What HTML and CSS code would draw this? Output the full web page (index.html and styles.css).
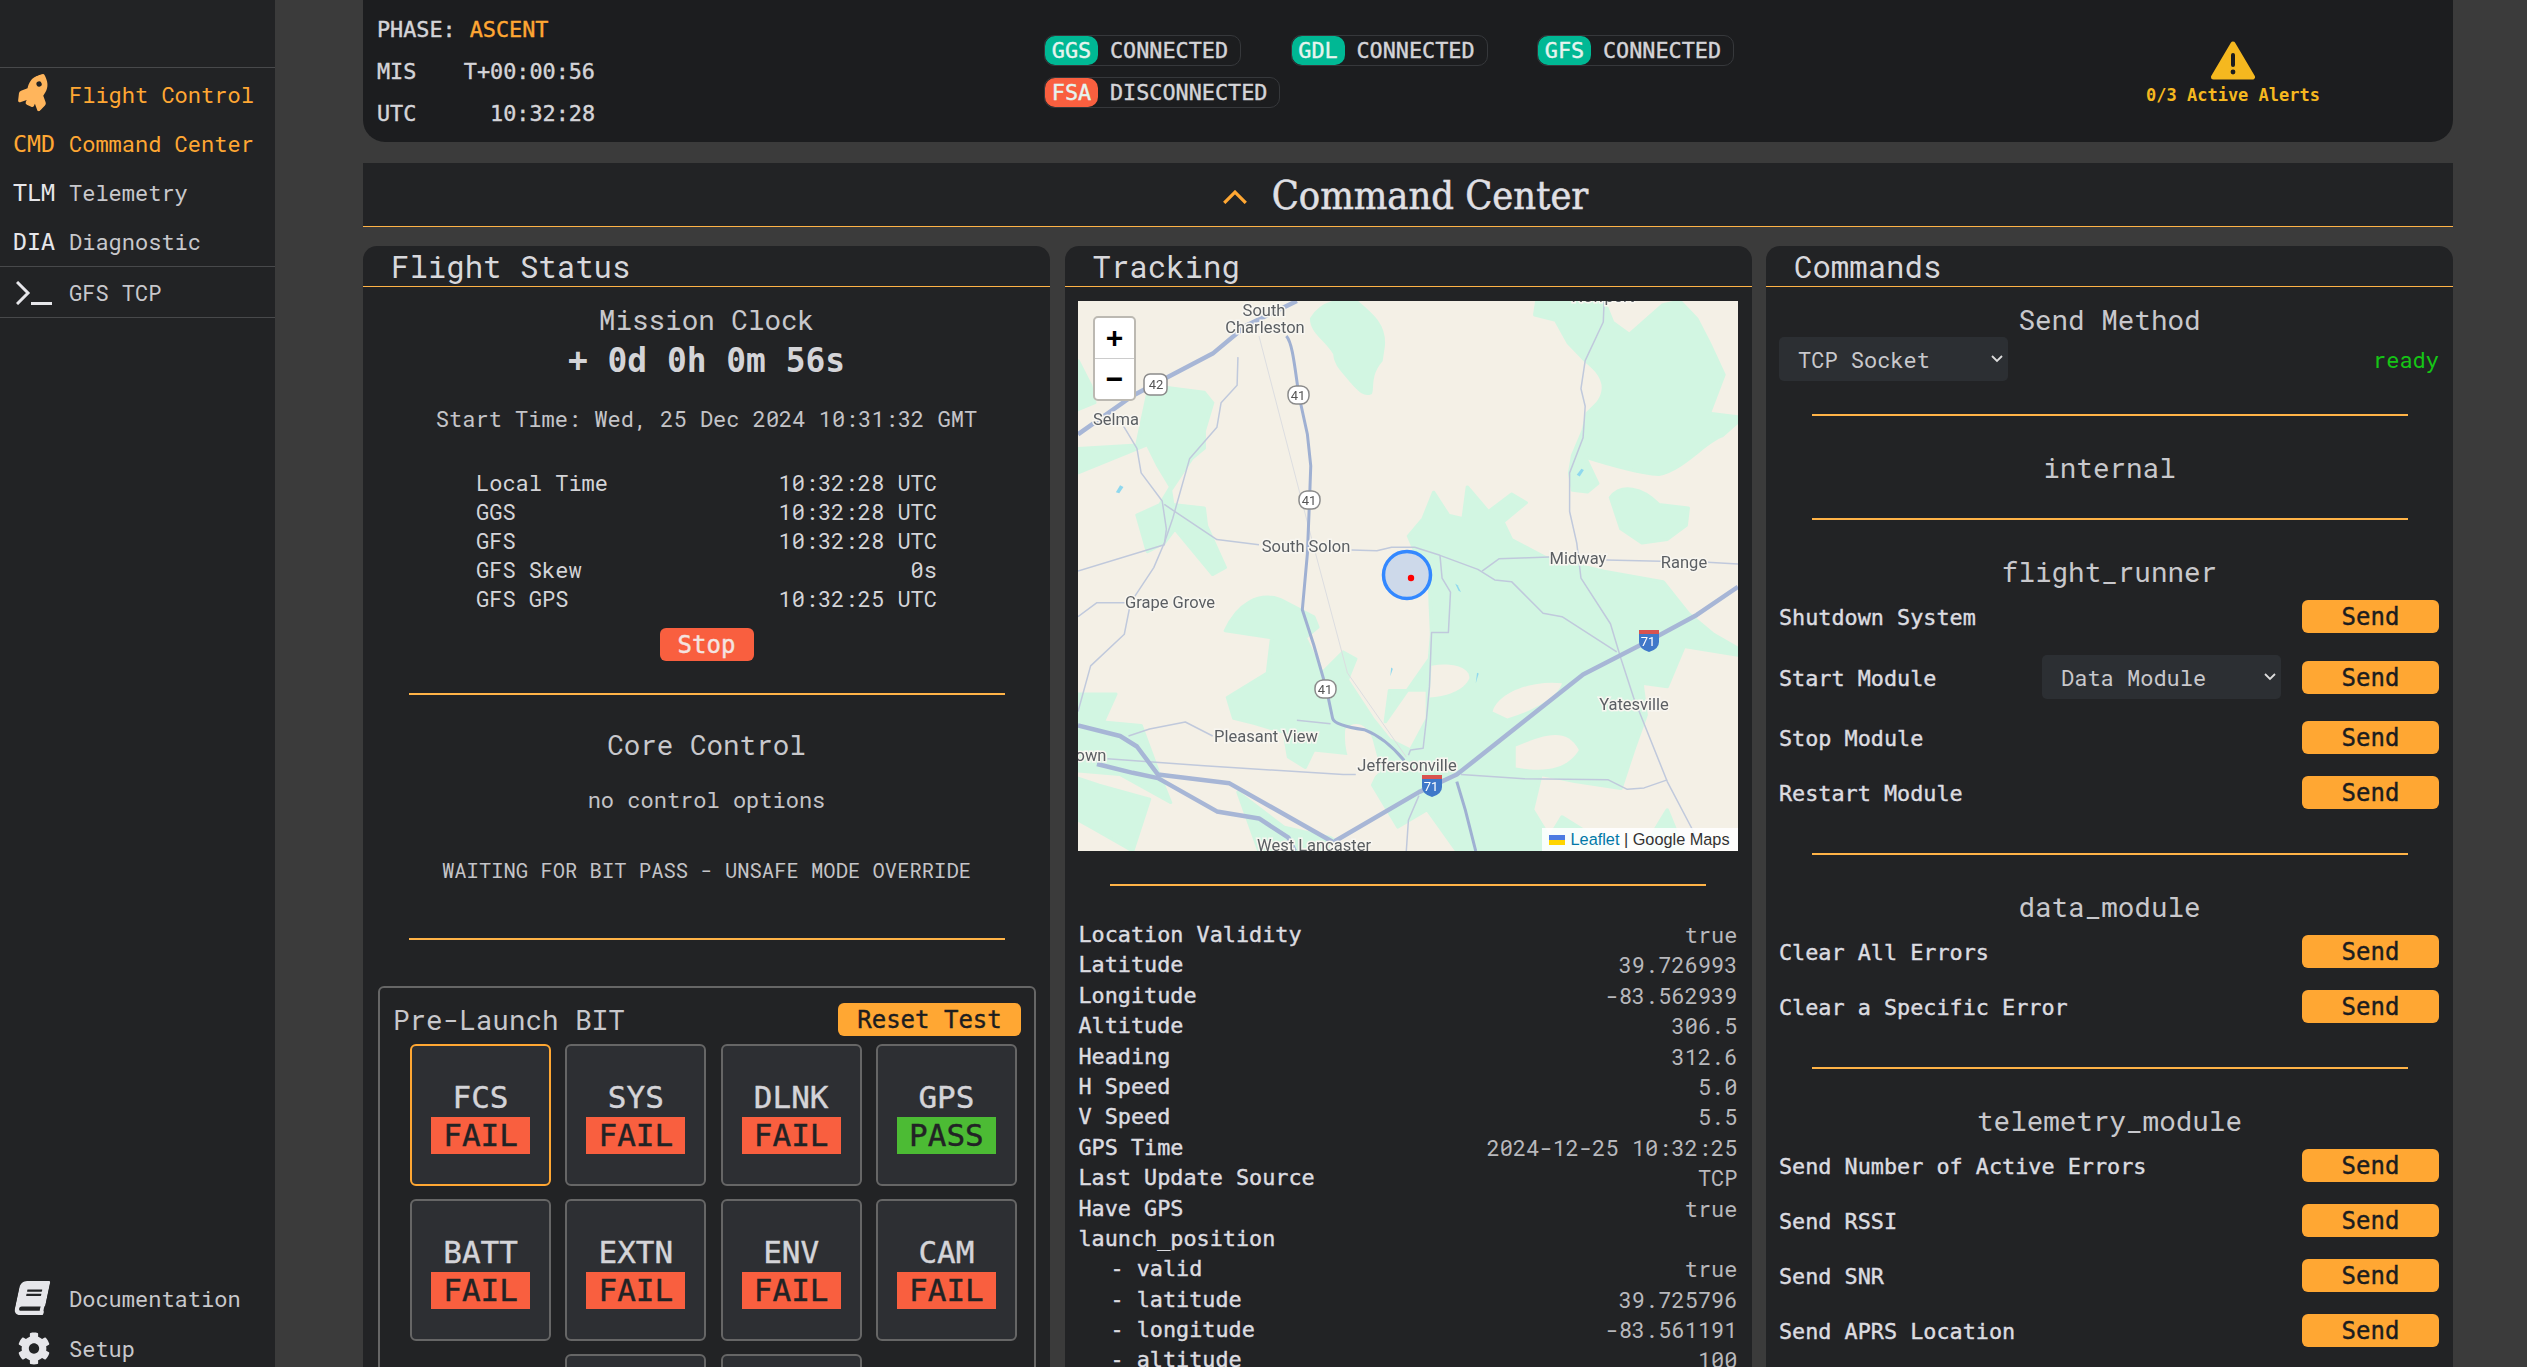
FILE: index.html
```html
<!DOCTYPE html>
<html>
<head>
    <title>Command Center</title>
    <link rel="stylesheet" href="styles.css">
</head>
<body>
    <nav class="sidebar">
        <div class="nav_group">
            <div class="nav_row active">
                <span class="nav_icon">
                    <svg class="rocket" viewBox="0 0 512 512"><path d="M505.05 19.1a15.89 15.89 0 0 0-12.2-12.2C460.65 0 435.46 0 410.36 0c-103.2 0-165.1 55.2-211.29 128H94.87A48 48 0 0 0 52 154.49l-49.42 98.8A24 24 0 0 0 24.07 288h103.77l-22.47 22.47a32 32 0 0 0 0 45.25l50.9 50.91a32 32 0 0 0 45.26 0L224 384.16V488a24 24 0 0 0 34.7 21.49l98.7-49.39a47.91 47.91 0 0 0 26.5-42.9V312.79c72.59-46.3 128-108.4 128-211.09.1-25.2.1-50.4-6.85-82.6zM384 168a40 40 0 1 1 40-40 40 40 0 0 1-40 40z"/></svg>
                </span>
                <span>Flight Control</span>
            </div>
            <div class="nav_row active"><span class="nav_icon nav_tag">CMD</span><span>Command Center</span></div>
            <div class="nav_row"><span class="nav_icon nav_tag">TLM</span><span>Telemetry</span></div>
            <div class="nav_row"><span class="nav_icon nav_tag">DIA</span><span>Diagnostic</span></div>
        </div>
        <div class="nav_group">
            <div class="nav_row">
                <span class="nav_icon">
                    <svg class="terminal" viewBox="0 0 36 24"><path d="M1 1 L12 12 L1 23"/><path d="M15 22.5 H36"/></svg>
                </span>
                <span>GFS TCP</span>
            </div>
        </div>
        <div class="nav_bottom">
            <div class="nav_row">
                <span class="nav_icon">
                    <svg class="book" viewBox="0 0 448 512"><path d="M448 360V24c0-13.3-10.7-24-24-24H96C43 0 0 43 0 96v320c0 53 43 96 96 96h328c13.3 0 24-10.7 24-24v-16c0-7.5-3.5-14.3-8.9-18.7-4.2-15.4-4.2-59.3 0-74.7 5.4-4.3 8.9-11.1 8.9-18.6zM128 134c0-3.3 2.7-6 6-6h212c3.3 0 6 2.7 6 6v20c0 3.3-2.7 6-6 6H134c-3.3 0-6-2.7-6-6v-20zm0 64c0-3.3 2.7-6 6-6h212c3.3 0 6 2.7 6 6v20c0 3.3-2.7 6-6 6H134c-3.3 0-6-2.7-6-6v-20zm253.4 250H96c-17.7 0-32-14.3-32-32 0-17.6 14.4-32 32-32h285.4c-1.9 17.1-1.9 46.9 0 64z"/></svg>
                </span>
                <span>Documentation</span>
            </div>
            <div class="nav_row">
                <span class="nav_icon">
                    <svg class="gear" viewBox="0 0 512 512"><path d="M487.4 315.7l-42.6-24.6c4.3-23.2 4.3-47 0-70.2l42.6-24.6c4.9-2.8 7.1-8.6 5.5-14-11.1-35.6-30-67.8-54.7-94.6-3.8-4.1-10-5.1-14.8-2.3L380.8 110c-17.9-15.4-38.5-27.3-60.8-35.1V25.8c0-5.6-3.9-10.5-9.4-11.7-36.7-8.2-74.3-7.8-109.2 0-5.5 1.2-9.4 6.1-9.4 11.7V75c-22.2 7.9-42.8 19.8-60.8 35.1L88.7 85.5c-4.9-2.8-11-1.9-14.8 2.3-24.7 26.7-43.6 58.9-54.7 94.6-1.7 5.4.6 11.2 5.5 14L67.3 221c-4.3 23.2-4.3 47 0 70.2l-42.6 24.6c-4.9 2.8-7.1 8.6-5.5 14 11.1 35.6 30 67.8 54.7 94.6 3.8 4.1 10 5.1 14.8 2.3l42.6-24.6c17.9 15.4 38.5 27.3 60.8 35.1v49.2c0 5.6 3.9 10.5 9.4 11.7 36.7 8.2 74.3 7.8 109.2 0 5.5-1.2 9.4-6.1 9.4-11.7v-49.2c22.2-7.9 42.8-19.8 60.8-35.1l42.6 24.6c4.9 2.8 11 1.9 14.8-2.3 24.7-26.7 43.6-58.9 54.7-94.6 1.5-5.5-.7-11.3-5.6-14.1zM256 336c-44.1 0-80-35.9-80-80s35.9-80 80-80 80 35.9 80 80-35.9 80-80 80z"/></svg>
                </span>
                <span>Setup</span>
            </div>
        </div>
    </nav>

    <main class="content">
        <header class="status_bar">
            <div class="status_times">
                <div class="phase_row">PHASE:<span class="phase_value">ASCENT</span></div>
                <div class="time_row"><span>MIS</span><span>T+00:00:56</span></div>
                <div class="time_row"><span>UTC</span><span>10:32:28</span></div>
            </div>
            <div class="status_links">
                <div class="link_badge"><span class="link_tag ok">GGS</span><span>CONNECTED</span></div>
                <div class="link_badge"><span class="link_tag ok">GDL</span><span>CONNECTED</span></div>
                <div class="link_badge"><span class="link_tag ok">GFS</span><span>CONNECTED</span></div>
                <div class="link_badge"><span class="link_tag bad">FSA</span><span>DISCONNECTED</span></div>
            </div>
            <div class="status_alerts">
                <svg class="warn_icon" viewBox="0 0 44 39">
                    <path class="warn_shape" d="M22 3 L41.5 36 H2.5 Z"/>
                    <rect class="warn_mark" x="20" y="12" width="4" height="14" rx="2"/>
                    <circle class="warn_mark" cx="22" cy="31" r="2.4"/>
                </svg>
                <div class="warn_text">0/3 Active Alerts</div>
            </div>
        </header>

        <div class="section_header">
            <svg class="chevron" viewBox="0 0 24 13"><path d="M2 12 L12 2 L22 12"/></svg>
            <h1>Command Center</h1>
        </div>

        <div class="panels">
            <section class="panel">
                <h2 class="panel_title">Flight Status</h2>
                <h3 class="sub_title first_title">Mission Clock</h3>
                <div class="big_clock">+ 0d 0h 0m 56s</div>
                <div class="start_time">Start Time: Wed, 25 Dec 2024 10:31:32 GMT</div>
                <table class="clock_table">
                    <tr><td>Local Time</td><td>10:32:28 UTC</td></tr>
                    <tr><td>GGS</td><td>10:32:28 UTC</td></tr>
                    <tr><td>GFS</td><td>10:32:28 UTC</td></tr>
                    <tr><td>GFS Skew</td><td>0s</td></tr>
                    <tr><td>GFS GPS</td><td>10:32:25 UTC</td></tr>
                </table>
                <div class="stop_wrap"><button class="btn btn_stop">Stop</button></div>
                <hr class="divider divider_stop">
                <h3 class="sub_title core_title">Core Control</h3>
                <div class="no_options">no control options</div>
                <div class="waiting">WAITING FOR BIT PASS - UNSAFE MODE OVERRIDE</div>
                <hr class="divider divider_bit">
                <div class="bit_box">
                    <div class="bit_header">
                        <span class="bit_title">Pre-Launch BIT</span>
                        <button class="btn btn_reset">Reset Test</button>
                    </div>
                    <div class="bit_grid">
                        <div class="bit_cell selected"><span>FCS</span><span class="bit_state fail">FAIL</span></div>
                        <div class="bit_cell"><span>SYS</span><span class="bit_state fail">FAIL</span></div>
                        <div class="bit_cell"><span>DLNK</span><span class="bit_state fail">FAIL</span></div>
                        <div class="bit_cell"><span>GPS</span><span class="bit_state pass">PASS</span></div>
                        <div class="bit_cell"><span>BATT</span><span class="bit_state fail">FAIL</span></div>
                        <div class="bit_cell"><span>EXTN</span><span class="bit_state fail">FAIL</span></div>
                        <div class="bit_cell"><span>ENV</span><span class="bit_state fail">FAIL</span></div>
                        <div class="bit_cell"><span>CAM</span><span class="bit_state fail">FAIL</span></div>
                        <div class="bit_cell"></div>
                        <div class="bit_cell"></div>
                    </div>
                </div>
            </section>

            <section class="panel">
                <h2 class="panel_title">Tracking</h2>
                <div class="map">
                    <svg class="map_svg" viewBox="0 0 660 550">
                        <!-- traced at 1568 square, hence the scale -->
                        <g transform="scale(0.4209 0.3508)">
                            <g class="land">
                                <path d="M555 50 C570 20 590 5 620 0 L660 0 C700 40 730 70 725 130 L720 170 C690 210 700 250 695 262 C680 270 670 255 650 230 C630 200 610 180 610 150 C590 110 555 90 555 50 Z"/>
                                <path d="M1090 0 L1085 40 L1135 55 L1165 120 L1205 170 C1250 210 1260 250 1235 290 L1210 320 L1200 370 L1175 440 L1168 490 L1175 540 L1210 545 L1235 520 L1205 445 C1270 470 1330 490 1380 495 C1440 480 1490 400 1530 385 L1568 345 L1568 330 L1500 320 L1535 210 L1500 120 L1470 50 L1430 0 L1390 10 L1310 95 L1270 60 L1250 0 Z"/>
                                <path d="M1265 560 C1290 520 1340 530 1380 580 L1450 590 L1445 640 L1400 680 L1340 690 L1290 650 Z"/>
                                <path d="M170 240 L300 260 L320 290 L300 370 L300 420 L270 450 L220 540 L225 580 L300 590 L305 640 L350 760 L320 780 L230 650 L205 690 L165 715 L140 610 L195 580 L220 530 L190 470 L165 410 L0 490 L0 420 L140 410 Z"/>
                                <path d="M0 170 L30 240 L40 290 L0 310 Z"/>
                                <path d="M785 670 L820 620 L845 545 L880 610 L915 620 L925 530 L975 600 L1030 550 L1065 575 L1010 630 L1030 680 L1110 730 L1250 770 L1390 800 L1450 890 L1510 950 L1568 990 L1568 1010 L1440 985 L1400 1100 L1340 1090 L1350 1180 L1320 1280 L1290 1390 L1180 1370 L1100 1350 L1080 1450 L1140 1568 L900 1568 L830 1450 L760 1500 L700 1380 L720 1330 L640 1290 L560 1280 L540 1330 L500 1300 L490 1230 L420 1205 L370 1190 L355 1130 L450 1060 L460 960 L350 940 C380 860 430 830 480 850 L560 900 L570 930 L540 960 L580 1060 L630 1000 L660 1020 L640 1080 L700 1190 L740 1250 L790 1280 L830 1190 L830 1110 L740 1110 L730 1200 L835 1020 L840 950 L835 810 Z"/>
                                <path d="M0 1120 L90 1120 L60 1200 L150 1210 L190 1340 L220 1430 L100 1350 L0 1340 Z"/>
                                <path d="M0 1360 L50 1380 L170 1420 L130 1568 L30 1500 L0 1480 Z"/>
                                <path d="M380 1400 L490 1500 L600 1530 L650 1568 L430 1568 Z"/>
                                <path d="M1150 1470 L1230 1530 L1280 1568 L1100 1568 Z"/>
                                <path d="M1400 1450 L1440 1568 L1340 1568 Z"/>
                            </g>
                            <g class="clearing">
                                <path d="M840 1040 C880 1030 930 1040 930 1075 C920 1110 870 1130 835 1130 Z"/>
                                <path d="M985 1170 C1000 1110 1090 1080 1150 1090 C1140 1130 1080 1170 1020 1190 Z"/>
                                <path d="M1040 1270 C1100 1240 1160 1210 1190 1280 C1170 1320 1130 1350 1040 1330 Z"/>
                                <path d="M635 1220 C660 1190 690 1210 700 1250 L720 1340 L680 1380 C650 1340 630 1290 635 1220 Z"/>
                            </g>
                            <g class="water">
                                <path d="M90 545 L100 525 L108 530 L98 548 Z"/>
                                <path d="M1185 495 L1196 478 L1202 482 L1192 500 Z"/>
                                <path d="M896 805 L902 810 L910 830 L904 825 Z"/>
                                <path d="M744 1045 L748 1048 L742 1070 Z"/>
                                <path d="M948 1060 L952 1062 L945 1090 Z"/>
                            </g>
                            <g class="road_faint">
                                <path d="M430 100 L560 700 L640 1060 L780 1300"/>
                            </g>
                            <g class="road_thin">
                                <path d="M1250 0 L1248 60 L1205 170 L1195 250 L1205 300 L1200 390 L1168 490 L1168 600 L1185 690 L1195 790 L1265 920 L1290 1020 L1320 1130 L1400 1370 L1470 1530"/>
                                <path d="M205 580 L330 680 L430 695"/>
                                <path d="M650 710 L710 712 L745 702 L800 702 L860 725 L950 765 L990 795 L1030 800 L1105 890 L1150 900 L1280 1000"/>
                                <path d="M960 770 L1000 735 L1120 730"/>
                                <path d="M1255 738 L1385 742"/>
                                <path d="M1495 745 L1568 750"/>
                                <path d="M860 725 L865 790 L885 830 L880 945 L840 945 L835 1100 L828 1190 L820 1275 L790 1280 L785 1295"/>
                                <path d="M0 770 L205 695 L210 650 L200 570 L150 490 L140 420 L100 340"/>
                                <path d="M380 160 L378 240 L340 290 L330 360 L265 450 L225 620 L205 690 L180 760 L125 860 L110 950 L30 1040 L0 1170"/>
                                <path d="M0 900 L45 860 L115 860"/>
                                <path d="M70 1305 L300 1325 L630 1350 L660 1350"/>
                                <path d="M910 1350 L1060 1362 L1260 1365 L1305 1392 L1345 1388 L1400 1365"/>
                                <path d="M120 1240 L170 1220 L255 1200 L320 1240"/>
                                <path d="M520 1195 L600 1205"/>
                                <path d="M810 1410 L785 1480 L780 1568"/>
                            </g>
                            <g class="road_mid">
                                <path d="M495 100 C510 120 515 190 525 270 L545 380 L553 470 L550 570 L545 720 L533 880 L560 980 L590 1105 L605 1190 Q610 1210 680 1222 Q730 1245 775 1310"/>
                                <path d="M900 1370 L920 1450 L945 1568"/>
                            </g>
                            <g class="road_main">
                                <path d="M0 380 L130 270 L200 225 L320 150 L400 70 L520 0"/>
                                <path d="M0 1210 L100 1240 L140 1270 L190 1350 L360 1375 L610 1545"/>
                                <path d="M45 1320 L130 1345 L190 1360 L330 1455 L430 1475 L500 1530 L515 1568"/>
                                <path d="M610 1540 L810 1400 L900 1350 L1200 1065 L1370 960 L1470 895 L1568 815"/>
                            </g>
                        </g>

                        <g class="map_label">
                            <text x="186" y="15">South</text>
                            <text x="187" y="32">Charleston</text>
                            <text x="38" y="124">Selma</text>
                            <text x="228" y="251">South Solon</text>
                            <text x="500" y="263">Midway</text>
                            <text x="606" y="267">Range</text>
                            <text x="92" y="307">Grape Grove</text>
                            <text x="556" y="409">Yatesville</text>
                            <text x="188" y="441">Pleasant View</text>
                            <text x="329" y="470">Jeffersonville</text>
                            <text x="13" y="460">own</text>
                            <text x="236" y="550">West Lancaster</text>
                            <text x="525" y="1">Newport</text>
                        </g>

                        <g class="shield_state">
                            <rect x="66" y="73" width="23" height="21" rx="6"/><text x="78" y="88">42</text>
                            <rect x="210" y="85" width="21" height="18" rx="8"/><text x="220" y="99">41</text>
                            <rect x="221" y="190" width="21" height="18" rx="8"/><text x="231" y="204">41</text>
                            <rect x="237" y="379" width="21" height="18" rx="8"/><text x="247" y="393">41</text>
                        </g>
                        <g class="shield_inter">
                            <path class="shield_top" d="M561 329 H581 V335 H561 Z"/>
                            <path class="shield_body" d="M561 333 H581 V341 Q581 348 571 351 Q561 348 561 341 Z"/>
                            <text x="570" y="345">71</text>
                            <path class="shield_top" d="M344 474 H364 V480 H344 Z"/>
                            <path class="shield_body" d="M344 478 H364 V486 Q364 493 354 496 Q344 493 344 486 Z"/>
                            <text x="353" y="490">71</text>
                        </g>

                        <circle class="range_ring" cx="329" cy="274" r="23.5"/>
                        <circle class="range_dot" cx="333" cy="277" r="3.2"/>
                    </svg>
                    <div class="map_zoom">
                        <span class="zoom_btn">+</span>
                        <span class="zoom_btn">&minus;</span>
                    </div>
                    <div class="map_credit">
                        <svg class="credit_flag" viewBox="0 0 16 10"><rect width="16" height="5" fill="#4c7be1"/><rect y="5" width="16" height="5" fill="#ffd500"/></svg>
                        <span class="credit_link">Leaflet</span> | Google Maps
                    </div>
                </div>
                <hr class="divider">
                <div class="track_list">
                    <div class="track_row"><span class="track_key">Location Validity</span><span>true</span></div>
                    <div class="track_row"><span class="track_key">Latitude</span><span>39.726993</span></div>
                    <div class="track_row"><span class="track_key">Longitude</span><span>-83.562939</span></div>
                    <div class="track_row"><span class="track_key">Altitude</span><span>306.5</span></div>
                    <div class="track_row"><span class="track_key">Heading</span><span>312.6</span></div>
                    <div class="track_row"><span class="track_key">H Speed</span><span>5.0</span></div>
                    <div class="track_row"><span class="track_key">V Speed</span><span>5.5</span></div>
                    <div class="track_row"><span class="track_key">GPS Time</span><span>2024-12-25 10:32:25</span></div>
                    <div class="track_row"><span class="track_key">Last Update Source</span><span>TCP</span></div>
                    <div class="track_row"><span class="track_key">Have GPS</span><span>true</span></div>
                    <div class="track_row"><span class="track_key">launch_position</span></div>
                    <div class="track_row nested"><span class="track_key">- valid</span><span>true</span></div>
                    <div class="track_row nested"><span class="track_key">- latitude</span><span>39.725796</span></div>
                    <div class="track_row nested"><span class="track_key">- longitude</span><span>-83.561191</span></div>
                    <div class="track_row nested"><span class="track_key">- altitude</span><span>100</span></div>
                </div>
            </section>

            <section class="panel">
                <h2 class="panel_title">Commands</h2>
                <h3 class="sub_title first_title">Send Method</h3>
                <div class="method_row">
                    <select class="dropdown method_select"><option>TCP Socket</option></select>
                    <span class="ready">ready</span>
                </div>
                <hr class="divider">
                <h3 class="sub_title section_title">internal</h3>
                <hr class="divider">
                <h3 class="sub_title section_title">flight_runner</h3>
                <div class="cmd_list">
                    <div class="cmd_row"><span class="cmd_name">Shutdown System</span><button class="btn btn_send">Send</button></div>
                    <div class="cmd_row">
                        <span class="cmd_name">Start Module</span>
                        <select class="dropdown module_select"><option>Data Module</option></select>
                        <button class="btn btn_send">Send</button>
                    </div>
                    <div class="cmd_row"><span class="cmd_name">Stop Module</span><button class="btn btn_send">Send</button></div>
                    <div class="cmd_row"><span class="cmd_name">Restart Module</span><button class="btn btn_send">Send</button></div>
                </div>
                <hr class="divider divider_cmd">
                <h3 class="sub_title section_title">data_module</h3>
                <div class="cmd_list">
                    <div class="cmd_row"><span class="cmd_name">Clear All Errors</span><button class="btn btn_send">Send</button></div>
                    <div class="cmd_row"><span class="cmd_name">Clear a Specific Error</span><button class="btn btn_send">Send</button></div>
                </div>
                <hr class="divider divider_cmd">
                <h3 class="sub_title section_title">telemetry_module</h3>
                <div class="cmd_list">
                    <div class="cmd_row"><span class="cmd_name">Send Number of Active Errors</span><button class="btn btn_send">Send</button></div>
                    <div class="cmd_row"><span class="cmd_name">Send RSSI</span><button class="btn btn_send">Send</button></div>
                    <div class="cmd_row"><span class="cmd_name">Send SNR</span><button class="btn btn_send">Send</button></div>
                    <div class="cmd_row"><span class="cmd_name">Send APRS Location</span><button class="btn btn_send">Send</button></div>
                </div>
            </section>
        </div>
    </main>
</body>
</html>
```

FILE: styles.css
```css
html, body {
    height: 100%;
    overflow: hidden;
}
body {
    margin: 0;
    display: flex;
    background-color: #3b3b3b;
    color: #d4d4d8;
    font-family: "Roboto Mono", "Liberation Mono", monospace;
    font-size: 22px;
}
h1, h2, h3 {
    margin: 0;
    font-weight: normal;
}

/* sidebar */
.sidebar {
    flex: 0 0 275px;
    height: 100vh;
    display: flex;
    flex-direction: column;
    padding-top: 67px;
    box-sizing: border-box;
    background-color: #222325;
    color: #c8c8cc;
}
.nav_group {
    border-top: 1px solid #48494b;
    padding-top: 2px;
}
.nav_group + .nav_group {
    border-bottom: 1px solid #48494b;
    padding-top: 1px;
}
.nav_row {
    height: 49px;
    display: flex;
    align-items: center;
}
.nav_row.active {
    color: #ffa733;
}
.nav_icon {
    flex: 0 0 auto;
    width: 56px;
    padding-left: 13px;
    display: flex;
    align-items: center;
}
.nav_tag {
    font-family: "DejaVu Sans Mono", monospace;
    font-size: 23.3px;
    color: #e6e6ea;
}
.nav_row.active .nav_tag {
    color: #ffa733;
}
.rocket {
    width: 36px;
    height: 34px;
    margin-left: 3px;
    fill: #ffb55c;
    transform: rotate(-20deg);
}
.terminal {
    width: 36px;
    height: 24px;
    margin-left: 3px;
    fill: none;
    stroke: #e6e6ea;
    stroke-width: 3;
}
.book {
    width: 30px;
    height: 34px;
    margin-left: 4px;
    fill: #e6e6ea;
    transform: skewX(-12deg);
}
.gear {
    width: 34px;
    height: 33px;
    margin-left: 4px;
    fill: #e6e6ea;
}
.nav_bottom {
    margin-top: auto;
    margin-bottom: -6px;
}
.nav_bottom .nav_row {
    height: 50px;
}

/* main column */
.content {
    flex: 1;
    min-width: 0;
    padding: 0 74px 0 88px;
}
.status_bar {
    height: 142px;
    display: grid;
    grid-template-columns: 681px 969px 1fr;
    background-color: #1c1d1f;
    border-radius: 0 0 22px 22px;
    font-family: "DejaVu Sans Mono", monospace;
    font-size: 21.8px;
    -webkit-text-stroke: 0.4px currentColor;
}
.status_times {
    padding: 9px 0 0 14px;
    width: 218px;
    line-height: 42px;
}
.phase_row {
    white-space: nowrap;
}
.phase_value {
    margin-left: 14px;
    color: #ffa733;
}
.time_row {
    display: flex;
    justify-content: space-between;
}
.status_links {
    display: grid;
    grid-template-columns: repeat(3, 246.5px);
    grid-auto-rows: 42px;
    padding-top: 35px;
    align-items: start;
}
.link_badge {
    justify-self: start;
    height: 31px;
    display: flex;
    align-items: center;
    gap: 12px;
    padding-right: 12px;
    border: 1px solid #36383b;
    border-radius: 10px;
    box-sizing: border-box;
    line-height: 1;
}
.link_tag {
    width: 53px;
    height: 29px;
    display: flex;
    align-items: center;
    justify-content: center;
    border-radius: 10px;
    color: #e6f4ee;
}
.link_tag.ok {
    background-color: #00b894;
}
.link_tag.bad {
    background-color: #f95f3f;
}
.status_alerts {
    padding-top: 41px;
    display: flex;
    flex-direction: column;
    align-items: center;
    color: #f5b81f;
}
.warn_icon {
    width: 44px;
    height: 39px;
}
.warn_shape {
    fill: #f5b81f;
    stroke: #f5b81f;
    stroke-width: 5;
    stroke-linejoin: round;
}
.warn_mark {
    fill: #1c1d1f;
}
.warn_text {
    margin-top: 4px;
    font-size: 17px;
    line-height: 22px;
    font-weight: bold;
    white-space: nowrap;
    -webkit-text-stroke: 0;
}

.section_header {
    height: 63px;
    margin-top: 21px;
    display: flex;
    align-items: center;
    justify-content: center;
    gap: 22px;
    background-color: #222325;
    border-bottom: 1px solid #ffb347;
}
.section_header h1 {
    font-family: "DejaVu Serif Condensed", "DejaVu Serif", serif;
    font-size: 39.4px;
    font-weight: normal;
    color: #e0e0e5;
    -webkit-text-stroke: 0.5px currentColor;
    transform: translateX(-2px);
}
.chevron {
    width: 26px;
    height: 14px;
    margin-top: 4px;
    fill: none;
    stroke: #ffa733;
    stroke-width: 3;
    transform: translateX(-4px);
}

.panels {
    display: grid;
    grid-template-columns: repeat(3, 687px);
    column-gap: 14.5px;
    margin-top: 19px;
}
.panel {
    background-color: #222325;
    border-radius: 14px 14px 0 0;
}
.panel_title {
    height: 40px;
    padding-left: 28px;
    font-size: 30.7px;
    line-height: 40px;
    border-bottom: 1px solid #ffb347;
    color: #d8d8dc;
}
.sub_title {
    font-size: 27.6px;
    line-height: 34px;
    text-align: center;
    color: #c8c8cc;
}
.first_title {
    margin-top: 15px;
}
.section_title {
    margin-top: 34px;
    padding-bottom: 1px;
}
.core_title {
    margin-top: 32px;
    padding-bottom: 1px;
}
.divider {
    width: 596px;
    height: 2px;
    margin: 33px auto 0;
    border: 0;
    background-color: #ffb347;
}
.divider_stop {
    margin-top: 32px;
}
.divider_cmd {
    margin-top: 44px;
}
.divider_bit {
    margin-top: 53px;
}

/* flight status */
.big_clock {
    margin-top: 4.5px;
    font-family: "DejaVu Sans Mono", monospace;
    font-size: 32.9px;
    font-weight: bold;
    line-height: 40px;
    text-align: center;
}
.start_time {
    margin-top: 24px;
    line-height: 28px;
    text-align: center;
    color: #c4c4c8;
}
.clock_table {
    width: 461px;
    margin: 35px auto 0;
    border-collapse: collapse;
}
.clock_table td {
    height: 29px;
    padding: 0;
}
.clock_table td:last-child {
    text-align: right;
}
.stop_wrap {
    margin-top: 15px;
    text-align: center;
}
.btn {
    height: 33px;
    padding: 2px 0 0;
    border: 0;
    border-radius: 6px;
    font-family: "DejaVu Sans Mono", monospace;
    font-size: 24px;
    line-height: 31px;
    background-color: #ffa733;
    color: #1c1d1f;
    -webkit-text-stroke: 0.4px currentColor;
}
.btn_stop {
    width: 94px;
    background-color: #f95f3f;
    color: #f4e4e0;
}
.no_options {
    margin-top: 24px;
    line-height: 28px;
    text-align: center;
    color: #c4c4c8;
}
.waiting {
    margin-top: 43px;
    font-size: 20.5px;
    line-height: 28px;
    text-align: center;
    color: #c4c4c8;
}
.bit_box {
    margin: 46px 14px 0 15px;
    padding-top: 15px;
    border: 2px solid #666;
    border-radius: 6px;
}
.bit_header {
    height: 33px;
    display: flex;
    justify-content: space-between;
    align-items: center;
    padding: 0 13px 0 13px;
    font-size: 27.6px;
    color: #c8c8cc;
}
.btn_reset {
    width: 183px;
}
.bit_grid {
    margin-top: 8px;
    padding: 0 17px 0 30px;
    display: flex;
    flex-wrap: wrap;
    justify-content: center;
    gap: 13px 14.3px;
}
.bit_cell {
    width: 141px;
    height: 142px;
    padding-top: 3px;
    display: flex;
    flex-direction: column;
    align-items: center;
    justify-content: center;
    gap: 2px;
    box-sizing: border-box;
    background-color: #2d2f33;
    border: 2px solid #666;
    border-radius: 6px;
    font-family: "DejaVu Sans Mono", monospace;
    font-size: 31px;
    line-height: 36px;
    -webkit-text-stroke: 0.4px currentColor;
}
.bit_cell.selected {
    border-color: #ffa733;
}
.bit_state {
    width: 99px;
    height: 37px;
    line-height: 37px;
    text-align: center;
    color: #222325;
}
.bit_state.fail {
    background-color: #f95f3f;
}
.bit_state.pass {
    background-color: #4cbb34;
}

/* tracking */
.map {
    position: relative;
    width: 660px;
    height: 550px;
    margin: 14px auto 0;
    overflow: hidden;
    background-color: #f4f0e6;
}
.map_svg {
    display: block;
    width: 660px;
    height: 550px;
    filter: blur(0.5px);
}
.land path {
    fill: #d2f6e2;
    stroke: #d2f6e2;
    stroke-width: 8;
    stroke-linejoin: round;
}
.clearing path {
    fill: #f4f0e6;
}
.water path {
    fill: #8fd8ee;
}
.road_faint path, .road_thin path, .road_mid path, .road_main path {
    fill: none;
    stroke-linejoin: round;
    vector-effect: non-scaling-stroke;
}
.road_faint path {
    stroke: #dcdde0;
    stroke-width: 1px;
}
.road_thin path {
    stroke: #c0c9dc;
    stroke-width: 1.5px;
}
.road_mid path {
    stroke: #9fb0d2;
    stroke-width: 3px;
}
.road_main path {
    stroke: #a7b6d6;
    stroke-width: 4.5px;
}
.map_label text {
    font-family: Roboto, "Liberation Sans", sans-serif;
    font-size: 16.5px;
    text-anchor: middle;
    fill: #5b5f63;
    stroke: #f8f6f0;
    stroke-width: 3px;
    paint-order: stroke;
}
.shield_state rect {
    fill: #fff;
    stroke: #8a8a8a;
    stroke-width: 1.5;
}
.shield_state text, .shield_inter text {
    font-family: Roboto, "Liberation Sans", sans-serif;
    font-size: 13px;
    text-anchor: middle;
    fill: #555;
}
.shield_top {
    fill: #d9534f;
}
.shield_body {
    fill: #3f78c9;
}
.shield_inter text {
    fill: #fff;
}
.range_ring {
    fill: #cdd9ea;
    stroke: #3388ff;
    stroke-width: 3.5;
}
.range_dot {
    fill: #f00;
}
.map_zoom {
    position: absolute;
    top: 15px;
    left: 15px;
    width: 43px;
    height: 85px;
    display: flex;
    flex-direction: column;
    box-sizing: border-box;
    border: 2px solid #bcb9b2;
    border-radius: 5px;
    background-color: #fff;
}
.zoom_btn {
    flex: 1;
    display: flex;
    align-items: center;
    justify-content: center;
    font-family: "Liberation Sans", sans-serif;
    font-size: 30px;
    font-weight: bold;
    line-height: 1;
    color: #000;
}
.zoom_btn + .zoom_btn {
    border-top: 1px solid #ccc;
}
.map_credit {
    position: absolute;
    right: 0;
    bottom: 0;
    height: 23px;
    width: 196px;
    padding-left: 7px;
    box-sizing: border-box;
    background-color: rgba(255, 255, 255, 0.85);
    font-family: "Liberation Sans", sans-serif;
    font-size: 16.3px;
    line-height: 23px;
    color: #333;
    white-space: nowrap;
}
.credit_flag {
    width: 16px;
    height: 10px;
    margin-right: 1px;
}
.credit_link {
    color: #0078a8;
}
.track_list {
    margin: 34px 14px 0;
}
.track_row {
    height: 30.4px;
    line-height: 30.4px;
    display: flex;
    justify-content: space-between;
    color: #b8b8bc;
}
.track_key, .cmd_name {
    font-family: "DejaVu Sans Mono", monospace;
    font-size: 21.8px;
    color: #dcdce0;
    -webkit-text-stroke: 0.4px currentColor;
}
.cmd_name {
    padding-top: 2px;
}
.track_row.nested {
    padding-left: 32px;
}

/* commands */
.dropdown {
    height: 44px;
    padding: 0 0 0 19px;
    border: 0;
    border-radius: 5px;
    appearance: none;
    background: #2c2f33 url("data:image/svg+xml,%3Csvg xmlns='http://www.w3.org/2000/svg' viewBox='0 0 12 8'%3E%3Cpath d='M1 1l5 5 5-5' fill='none' stroke='%23ddd' stroke-width='1.8'/%3E%3C/svg%3E") no-repeat right 5px center / 12px 8px;
    font-family: "Roboto Mono", "Liberation Mono", monospace;
    font-size: 22px;
    color: #c8c8cc;
}
.method_row {
    margin: 1px 14px 0 13px;
    display: flex;
    align-items: center;
    justify-content: space-between;
}
.method_select {
    width: 229px;
}
.ready {
    color: #15c515;
}
.cmd_list {
    margin: 11px 14px 0 13px;
    display: flex;
    flex-direction: column;
    gap: 22px;
}
.cmd_row {
    display: flex;
    align-items: center;
    gap: 21px;
}
.cmd_name {
    margin-right: auto;
}
.module_select {
    width: 239px;
}
.btn_send {
    width: 137px;
}
```
